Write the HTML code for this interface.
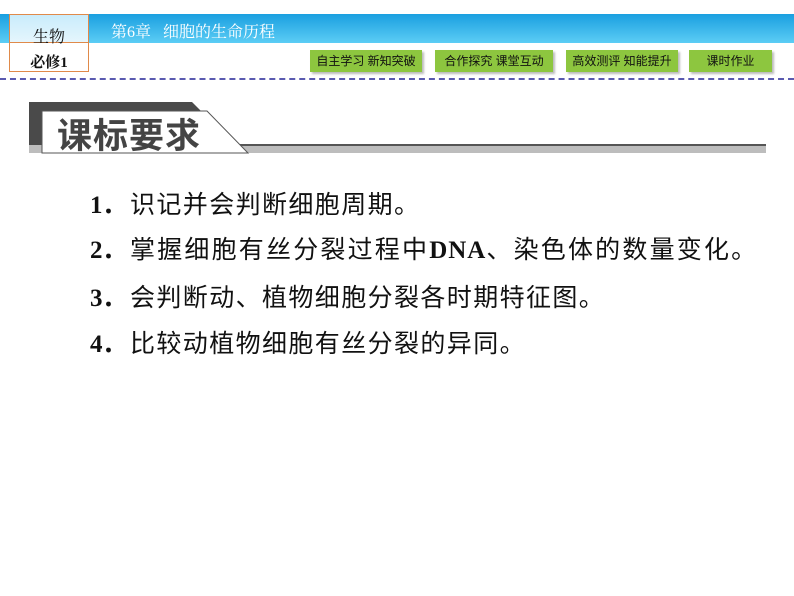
<!DOCTYPE html>
<html><head><meta charset="utf-8"><style>
body{margin:0;width:794px;height:596px;background:#fff;position:relative;overflow:hidden;font-family:"Liberation Serif","Noto Serif CJK SC",serif}
.a{position:absolute}
.bar{left:0;top:14px;width:794px;height:29px;background:linear-gradient(#1a9fe0,#5ccdf5)}
.box{left:9px;top:14px;width:80px;height:58px;border:1px solid #e08a4a;box-sizing:border-box}
.btn{top:50px;height:22px;background:#8dc63f;color:#111;font:12px "Liberation Sans","Noto Sans CJK SC",sans-serif;text-align:center;line-height:22px;box-shadow:2px 2px 2px #bbb}
.li{left:90px;font-size:25px;letter-spacing:1.4px;color:#111;font-family:"Liberation Serif","Noto Sans CJK SC",sans-serif;white-space:nowrap}
.li b{font-family:"Liberation Serif",serif;display:inline-block;width:40px;letter-spacing:0}
</style></head><body>
<div class="a bar"></div>
<div class="a" style="left:10px;top:15px;width:78px;height:28px;background:linear-gradient(#c9ecfb,#e6f6fd)"></div>
<div class="a box"></div>
<div class="a" style="left:9px;top:42px;width:80px;height:1px;background:#e08a4a"></div>
<div class="a" style="left:10px;top:24px;width:78px;text-align:center;font-size:16px;color:#111">生物</div>
<div class="a" style="left:10px;top:51px;width:78px;text-align:center;font-size:15px;font-weight:bold;color:#111">必修1</div>
<div class="a" style="left:111px;top:19px;font-size:16px;color:#fff">第6章&nbsp;&nbsp;&nbsp;细胞的生命历程</div>
<div class="a btn" style="left:310px;width:112px">自主学习 新知突破</div>
<div class="a btn" style="left:435px;width:118px">合作探究 课堂互动</div>
<div class="a btn" style="left:566px;width:112px">高效测评 知能提升</div>
<div class="a btn" style="left:689px;width:83px">课时作业</div>
<div class="a" style="left:0;top:78px;width:794px;border-top:2px dashed #5a5ab0"></div>
<svg class="a" style="left:0;top:0" width="794" height="160">
<polygon points="29,102 192,102 205,115 205,145 29,145" fill="#4a4a4a"/>
<rect x="240" y="144" width="526" height="9" fill="#bdbdbd"/>
<rect x="240" y="144" width="526" height="2" fill="#555"/>
<rect x="29" y="145" width="20" height="8" fill="#bdbdbd"/>
<polygon points="42,111 207,111 248,153 42,153" fill="#fff" stroke="#555" stroke-width="1"/>
</svg>
<div class="a" style="left:57px;top:108px;font:bold 35px 'Noto Sans CJK SC',sans-serif;color:#444;letter-spacing:1px">课标要求</div>
<div class="a li" style="top:185px"><b>1．</b>识记并会判断细胞周期。</div>
<div class="a li" style="top:230px;letter-spacing:2.2px"><b>2．</b>掌握细胞有丝分裂过程中<b style="width:auto;letter-spacing:1px">DNA</b>、染色体的数量变化。</div>
<div class="a li" style="top:278px"><b>3．</b>会判断动、植物细胞分裂各时期特征图。</div>
<div class="a li" style="top:324px"><b>4．</b>比较动植物细胞有丝分裂的异同。</div>
</body></html>
